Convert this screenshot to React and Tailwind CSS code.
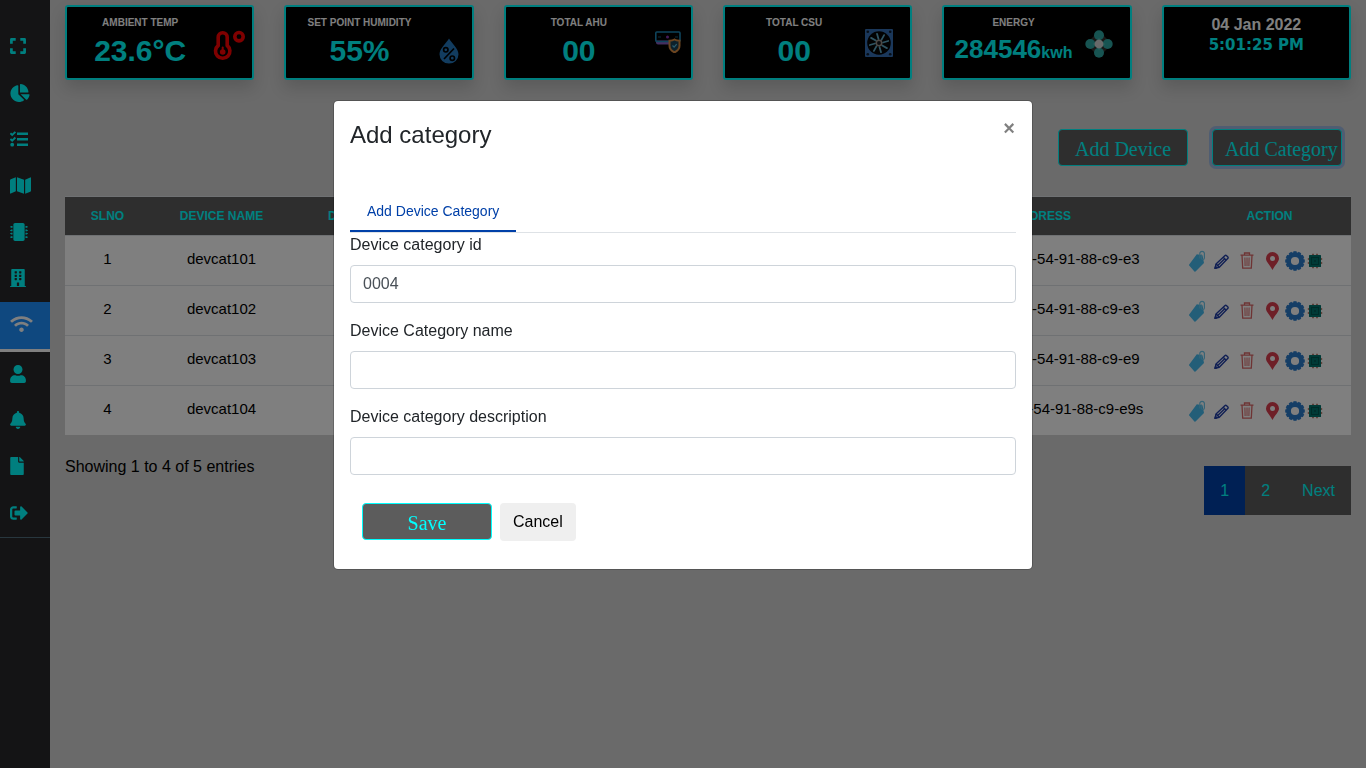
import {
  FaChartPie,
  FaMap,
  FaMicrochip,
  FaBuilding,
  FaWifi,
  FaUser,
  FaBell,
  FaFile,
  FaSignOutAlt,
} from "react-icons/fa";

function ExpandIcon({ className }) {
  return (
    <svg className={className} viewBox="0 0 16 16" fill="none" stroke="currentColor" strokeWidth="2.700" strokeLinejoin="round" aria-hidden="true">
      <path d="M1.400 5.700V1.400H5.700M10.300 1.400h4.300v4.300M14.600 10.300v4.300h-4.300M5.700 14.600H1.400v-4.300" />
    </svg>
  );
}

function TaskListIcon({ className }) {
  return (
    <svg className={className} viewBox="0 0 18 16" fill="none" stroke="currentColor" aria-hidden="true">
      <path d="M7 2.700h11M7 8.200h11M7 13.700h11" strokeWidth="2.600" />
      <path d="M.4 2.300 2.200 4 5.400.8M.4 8 2.200 9.700 5.400 6.500" strokeWidth="1.900" />
      <circle cx="2.200" cy="13.700" r="1.900" fill="currentColor" stroke="none" />
    </svg>
  );
}

const navItems = [
  { label: "Full screen", Icon: ExpandIcon, size: "h-4 w-4" },
  { label: "Dashboard", Icon: FaChartPie, size: "h-[18px] w-5" },
  { label: "Tasks", Icon: TaskListIcon, size: "h-4 w-[18px]" },
  { label: "Map", Icon: FaMap, size: "h-[19px] w-[21px]" },
  { label: "Controllers", Icon: FaMicrochip, size: "h-[18px] w-[18px]" },
  { label: "Buildings", Icon: FaBuilding, size: "h-[18px] w-4" },
  { label: "Devices", Icon: FaWifi, size: "h-[18px] w-[23px]", active: true },
  { label: "Users", Icon: FaUser, size: "h-[18px] w-4" },
  { label: "Alerts", Icon: FaBell, size: "h-[18px] w-4" },
  { label: "Reports", Icon: FaFile, size: "h-[18px] w-[14px]" },
  { label: "Sign out", Icon: FaSignOutAlt, size: "h-[18px] w-[18px]" },
];

const devices = [
  { id: 1, name: "devcat101", category: "sensor", mac: "fc-54-91-88-c9-e3" },
  { id: 2, name: "devcat102", category: "sensor", mac: "fc-54-91-88-c9-e3" },
  { id: 3, name: "devcat103", category: "sensor", mac: "fc-54-91-88-c9-e9" },
  { id: 4, name: "devcat104", category: "sensor", mac: "fc-54-91-88-c9-e9s" },
];

function ThermometerIcon() {
  return (
    <svg className="h-8 w-8 shrink-0" viewBox="0 0 32 32" fill="none" stroke="#ff0000" aria-hidden="true">
      <path d="M5.200 15.500V7.300a4.500 4.500 0 0 1 9 0v8.200a7.200 7.200 0 1 1-9 0Z" strokeWidth="3.600" />
      <path d="M9.700 17.500v3" strokeWidth="2" strokeLinecap="round" />
      <circle cx="9.700" cy="22" r="2.800" fill="#ff0000" stroke="none" />
      <circle cx="26" cy="6.700" r="4.200" strokeWidth="3.600" />
    </svg>
  );
}

function HumidityIcon() {
  return (
    <svg className="h-[26px] w-5 shrink-0" viewBox="0 0 20 26" aria-hidden="true">
      <path d="M10 0.500C12.500 5 19.500 10.500 19.500 16.300a9.500 9.300 0 0 1-19 0C0.500 10.500 7.500 5 10 .5Z" fill="#2478be" />
      <g fill="none" stroke="#000" strokeWidth="1.700">
        <path d="M15 10.500 5 21" />
        <circle cx="6.800" cy="11.800" r="2.200" />
        <circle cx="13.300" cy="20.200" r="2.200" />
      </g>
    </svg>
  );
}

function AirUnitIcon() {
  return (
    <svg className="h-[22px] w-[26px] shrink-0" viewBox="0 0 26 22" fill="none" aria-hidden="true">
      <path d="M1 9.500h13v4H3a2 2 0 0 1-2-2Z" fill="#8a5cc0" />
      <rect x="0.800" y="1" width="24.200" height="9.500" rx="1" stroke="#1c88b8" strokeWidth="1.600" />
      <path d="M3 6h3M20 6h3" stroke="#155a78" />
      <circle cx="12.500" cy="6" r="1.500" fill="#8c34b4" />
      <path d="M19.500 8.500c1.500 1 3.200 1.300 5 1.300v5c0 3.200-2 5.200-5 6.600-3-1.400-5-3.400-5-6.600v-5c1.800 0 3.500-.3 5-1.300Z" fill="#1a4256" stroke="#d88a40" strokeWidth="2" />
      <path d="M17.500 14.500l1.600 1.600 2.600-3" stroke="#58b8dc" strokeWidth="1.300" />
    </svg>
  );
}

function FanIcon() {
  return (
    <svg className="h-7 w-7 shrink-0" viewBox="0 0 28 28" fill="none" aria-hidden="true">
      <rect width="28" height="28" rx="1" fill="#356eb4" />
      <circle cx="14" cy="14" r="11.800" fill="#050505" />
      <g fill="#0c1c30">
        <circle cx="2.800" cy="2.800" r="1.300" />
        <circle cx="25.200" cy="2.800" r="1.300" />
        <circle cx="2.800" cy="25.200" r="1.300" />
        <circle cx="25.200" cy="25.200" r="1.300" />
      </g>
      {[0, 45, 90, 135, 180, 225, 270, 315].map((angle) => (
        <path key={angle} d="M13.500 10 12 4.800" stroke="#5fa8c4" strokeWidth="1.800" strokeLinecap="round" transform={`rotate(${angle} 14 14)`} />
      ))}
      <circle cx="14" cy="14" r="2.700" fill="#15151a" stroke="#9a9088" strokeWidth="1.500" />
    </svg>
  );
}

function EnergyIcon() {
  return (
    <svg className="h-7 w-7 shrink-0" viewBox="0 0 28 28" aria-hidden="true">
      <path d="M14 1 27 14 14 27 1 14Z" fill="#33302f" />
      <g fill="#2fa8a4">
        <circle cx="14" cy="5.300" r="5" />
        <circle cx="14" cy="22.700" r="5" />
        <circle cx="5.300" cy="14" r="5" />
        <circle cx="22.700" cy="14" r="5" />
      </g>
      <path d="M14 8 20 14 14 20 8 14Z" fill="#58b4b0" />
      <circle cx="14" cy="14" r="4.300" fill="#d2d2d2" />
    </svg>
  );
}

function TagIcon() {
  return (
    <svg className="h-[22px] w-[17px]" viewBox="0 0 17 22" fill="none" aria-hidden="true">
      <path d="M7.800 4.300 13.500 5.200 15 13 6.800 21.300a1 1 0 0 1-1.400.1L.4 15.800a1 1 0 0 1-.2-1.400Z" fill="#46bdf0" />
      <path d="M10.800 8.500V3.600a2.300 2.300 0 0 1 4.600 0V8a1.500 1.500 0 0 1-3 0V4.500" stroke="#6cc8ee" strokeWidth="1.200" />
    </svg>
  );
}

function PencilIcon() {
  return (
    <svg className="h-[18px] w-[15px]" viewBox="0 0 15 18" fill="none" stroke="#2340a8" strokeWidth="1.400" strokeLinejoin="round" aria-hidden="true">
      <path d="M1 16.300 2 12 10.800 3.700a1.300 1.300 0 0 1 1.800 0l1.100 1.100a1.300 1.300 0 0 1 0 1.800L5.300 15.200Z" />
      <path d="M2 12l3.300 3.200M9.200 5.200l3 3M3.700 13.500 10.700 6.700M1 16.300l1.800-.5-1.200-1.300Z" />
    </svg>
  );
}

function TrashIcon() {
  return (
    <svg className="h-[17px] w-[14px]" viewBox="0 0 14 17" fill="none" stroke="#dc6868" strokeWidth="1.300" aria-hidden="true">
      <path d="M.5 3.100h13M4.500 3V1h5v2M2 3.300l.7 12.900h8.600L12 3.300" />
      <path d="M4.900 5.500l.2 8.500M7 5.500V14M9.100 5.500 8.900 14" strokeWidth="1" />
    </svg>
  );
}

function PinIcon() {
  return (
    <svg className="h-[18px] w-[13px]" viewBox="0 0 13 18" aria-hidden="true">
      <path fillRule="evenodd" d="M6.500 0A6.500 6.500 0 0 1 13 6.500C13 10 9 13 6.500 18 4 13 0 10 0 6.500A6.500 6.500 0 0 1 6.500 0Zm0 4a2.500 2.500 0 1 0 0 5 2.500 2.500 0 0 0 0-5Z" fill="#dc3f4f" />
    </svg>
  );
}

function GearIcon() {
  return (
    <svg className="h-5 w-5" viewBox="0 0 20 20" fill="none" aria-hidden="true">
      <circle cx="10" cy="10" r="6.500" stroke="#2a7ccc" strokeWidth="4.800" />
      <g stroke="#2a7ccc" strokeWidth="3.200">
        {[0, 30, 60, 90, 120, 150, 180, 210, 240, 270, 300, 330].map((angle) => (
          <path key={angle} d="M10 3V.2" transform={`rotate(${angle} 10 10)`} />
        ))}
      </g>
    </svg>
  );
}

function ChipIcon() {
  return (
    <svg className="h-4 w-4" viewBox="0 0 16 16" fill="none" aria-hidden="true">
      <path d="M6 .8v14.400M10 .8v14.400M.8 6h14.400M.8 10h14.400" stroke="#c08474" strokeWidth="2" />
      <rect x="2" y="2" width="12" height="12" rx="0.500" fill="#00746c" />
      <rect x="4.500" y="4.500" width="7" height="7" stroke="#005650" strokeWidth="1" />
      <rect x="7" y="7" width="2" height="2" fill="#005c58" />
    </svg>
  );
}

const cardClass =
  "flex h-[75px] overflow-hidden rounded-[3px] border-2 border-[#00ffff] bg-black text-center shadow-[0_8px_16px_rgba(0,0,0,0.15)]";

function StatCard({ label, children, icon, iconClass }) {
  return (
    <section className={cardClass}>
      <div className="min-w-0 flex-1 pt-2">
        <h2 className="text-[10px] leading-4 font-bold whitespace-nowrap text-white">{label}</h2>
        {children}
      </div>
      <div className={iconClass}>{icon}</div>
    </section>
  );
}

const valueClass = "text-[30px] leading-10 font-bold whitespace-nowrap text-[#00ffff]";

function Sidebar() {
  return (
    <nav aria-label="Main" className="w-[50px] shrink-0 bg-[#28282b] pt-6">
      <ul className="flex h-[514px] flex-col border-b border-[#506e7c]">
        {navItems.map(({ label, Icon, size, active }) => (
          <li key={label} className={active ? "flex flex-1 border-b-3 border-white bg-[#1e90ff]" : "flex flex-1"}>
            <a
              href="#"
              aria-label={label}
              className={
                active
                  ? "flex flex-1 items-center pb-[2px] pl-[10px] text-white"
                  : "flex flex-1 items-center pb-[2px] pl-[10px] text-[#00ffff]"
              }
            >
              <Icon className={size} />
            </a>
          </li>
        ))}
      </ul>
    </nav>
  );
}

const actions = [
  { label: "Tag", Icon: TagIcon, className: "" },
  { label: "Edit", Icon: PencilIcon, className: "ml-2" },
  { label: "Delete", Icon: TrashIcon, className: "ml-[11px]" },
  { label: "Location", Icon: PinIcon, className: "ml-3" },
  { label: "Settings", Icon: GearIcon, className: "ml-[6px]" },
  { label: "Hardware", Icon: ChipIcon, className: "ml-[2px]" },
];

const headCell = "h-[39px] border-t border-[#dee2e6]";
const bodyCell = "h-[50px] border-t border-[#dee2e6] pb-[2px]";

function DeviceTable() {
  return (
    <table className="mt-[30px] w-full table-fixed border-separate border-spacing-0 text-center text-[15px] text-black">
      <colgroup>
        <col className="w-[85px]" />
        <col className="w-[143px]" />
        <col />
        <col className="w-[216px]" />
        <col className="w-[163px]" />
      </colgroup>
      <thead className="bg-[#5c5c5c] text-xs text-[#00ffff]">
        <tr>
          <th scope="col" className={headCell}>SLNO</th>
          <th scope="col" className={headCell}>DEVICE NAME</th>
          <th scope="col" className={`${headCell} pl-[35px] text-left`}>DESC</th>
          <th scope="col" className={`${headCell} pr-[117px] text-right whitespace-nowrap`}>MAC ADDRESS</th>
          <th scope="col" className={headCell}>ACTION</th>
        </tr>
      </thead>
      <tbody className="bg-white">
        {devices.map((device) => (
          <tr key={device.id}>
            <td className={bodyCell}>{device.id}</td>
            <td className={bodyCell}>{device.name}</td>
            <td className={bodyCell}>{device.category}</td>
            <td className={bodyCell}>{device.mac}</td>
            <td className="h-[50px] border-t border-[#dee2e6]">
              <div className="flex items-center pl-px">
                {actions.map(({ label, Icon, className }) => (
                  <button key={label} type="button" aria-label={`${label} ${device.name}`} className={className}>
                    <Icon />
                  </button>
                ))}
              </div>
            </td>
          </tr>
        ))}
      </tbody>
    </table>
  );
}

const darkButton =
  "h-[37px] w-[130px] rounded-[4px] border border-[#00ffff] bg-[#5c5c5c] px-3 pt-[2px] font-['Liberation_Serif',serif] text-xl leading-none whitespace-nowrap text-[#00ffff]";

function TextField({ id, label, defaultValue }) {
  return (
    <div className="mb-4">
      <label htmlFor={id} className="mb-2 block leading-6">
        {label}
      </label>
      <input
        id={id}
        type="text"
        defaultValue={defaultValue}
        className="block h-[38px] w-full rounded-[4px] border border-[#ced4da] bg-white px-3 text-[#495057]"
      />
    </div>
  );
}

function AddCategoryDialog() {
  return (
    <div className="fixed inset-0 flex items-start justify-center bg-black/50 pt-[100px]">
      <form
        role="dialog"
        aria-modal="true"
        aria-labelledby="dialog-title"
        className="w-full max-w-[700px] rounded-[5px] border border-black/20 bg-white bg-clip-padding p-4 text-[#212529]"
      >
        <div className="flex items-start justify-between">
          <h1 id="dialog-title" className="text-2xl leading-9">
            Add category
          </h1>
          <button type="button" aria-label="Close" className="px-px text-xl leading-[22px] font-bold text-black/50">
            ×
          </button>
        </div>
        <div className="mt-9 flex border-b border-[#dee2e6]">
          <a href="#" className="flex h-[43px] items-center border-b-2 border-[#0040a8] px-[17px] pt-[2px] text-sm text-[#0040a8]">
            Add Device Category
          </a>
        </div>
        <TextField id="category-id" label="Device category id" defaultValue="0004" />
        <TextField id="category-name" label="Device Category name" />
        <TextField id="category-description" label="Device category description" />
        <div className="mt-7 mb-3 flex items-start gap-2 pl-3">
          <button type="submit" className={darkButton}>
            Save
          </button>
          <button type="button" className="h-[38px] rounded-[4px] bg-[#efefef] px-[13px] text-black">
            Cancel
          </button>
        </div>
      </form>
    </div>
  );
}

export default function App() {
  return (
    <div className="flex min-h-screen bg-[#d4d4d4] font-['Liberation_Sans',Arial,sans-serif] text-base text-black">
      <Sidebar />
      <main className="min-w-0 flex-1 px-[15px] pt-[5px]">
        <div className="grid grid-cols-6 gap-[30px]">
          <StatCard label="AMBIENT TEMP" icon={<ThermometerIcon />} iconClass="flex w-[39px] items-start justify-center pt-[23px] pr-[7px]">
            <p className={valueClass}>23.6°C</p>
          </StatCard>
          <StatCard label="SET POINT HUMIDITY" icon={<HumidityIcon />} iconClass="flex w-[39px] items-start justify-center pt-[31px] pr-[7px]">
            <p className={valueClass}>55%</p>
          </StatCard>
          <StatCard label="TOTAL AHU" icon={<AirUnitIcon />} iconClass="flex w-[39px] items-start justify-center pt-6 pr-[7px]">
            <p className={valueClass}>00</p>
          </StatCard>
          <StatCard label="TOTAL CSU" icon={<FanIcon />} iconClass="flex w-[47px] items-start justify-center pt-[22px] pr-4">
            <p className={valueClass}>00</p>
          </StatCard>
          <StatCard label="ENERGY" icon={<EnergyIcon />} iconClass="flex w-[47px] items-start justify-center pt-[23px] pr-[14px]">
            <p className="text-[26px] leading-9 font-bold whitespace-nowrap text-[#00ffff]">
              284546<span className="text-base">kwh</span>
            </p>
          </StatCard>
          <section className={cardClass}>
            <div className="flex-1 pt-2">
              <p className="leading-5 font-bold text-white">04 Jan 2022</p>
              <p className="font-['DejaVu_Sans',sans-serif] text-[15px] leading-5 font-bold text-[#00ffff]">5:01:25 PM</p>
            </div>
          </section>
        </div>

        <div className="mt-[49px] flex justify-end gap-6 pr-[9px]">
          <button type="button" className={darkButton}>
            Add Device
          </button>
          <button type="button" className={`${darkButton} ring-3 ring-[#9fbbe4]`}>
            Add Category
          </button>
        </div>

        <DeviceTable />

        <div className="mt-[31px] flex items-start justify-between">
          <p className="-mt-[11px] leading-6">Showing 1 to 4 of 5 entries</p>
          <nav aria-label="Pages" className="flex h-[49px] bg-[#5c5c5c] text-[#00ffff]">
            <a href="#" aria-current="page" className="flex items-center bg-[#0040a8] px-4 pt-px">
              1
            </a>
            <a href="#" className="flex items-center px-4 pt-px">
              2
            </a>
            <a href="#" className="flex items-center px-4 pt-px">
              Next
            </a>
          </nav>
        </div>
      </main>
      <AddCategoryDialog />
    </div>
  );
}
